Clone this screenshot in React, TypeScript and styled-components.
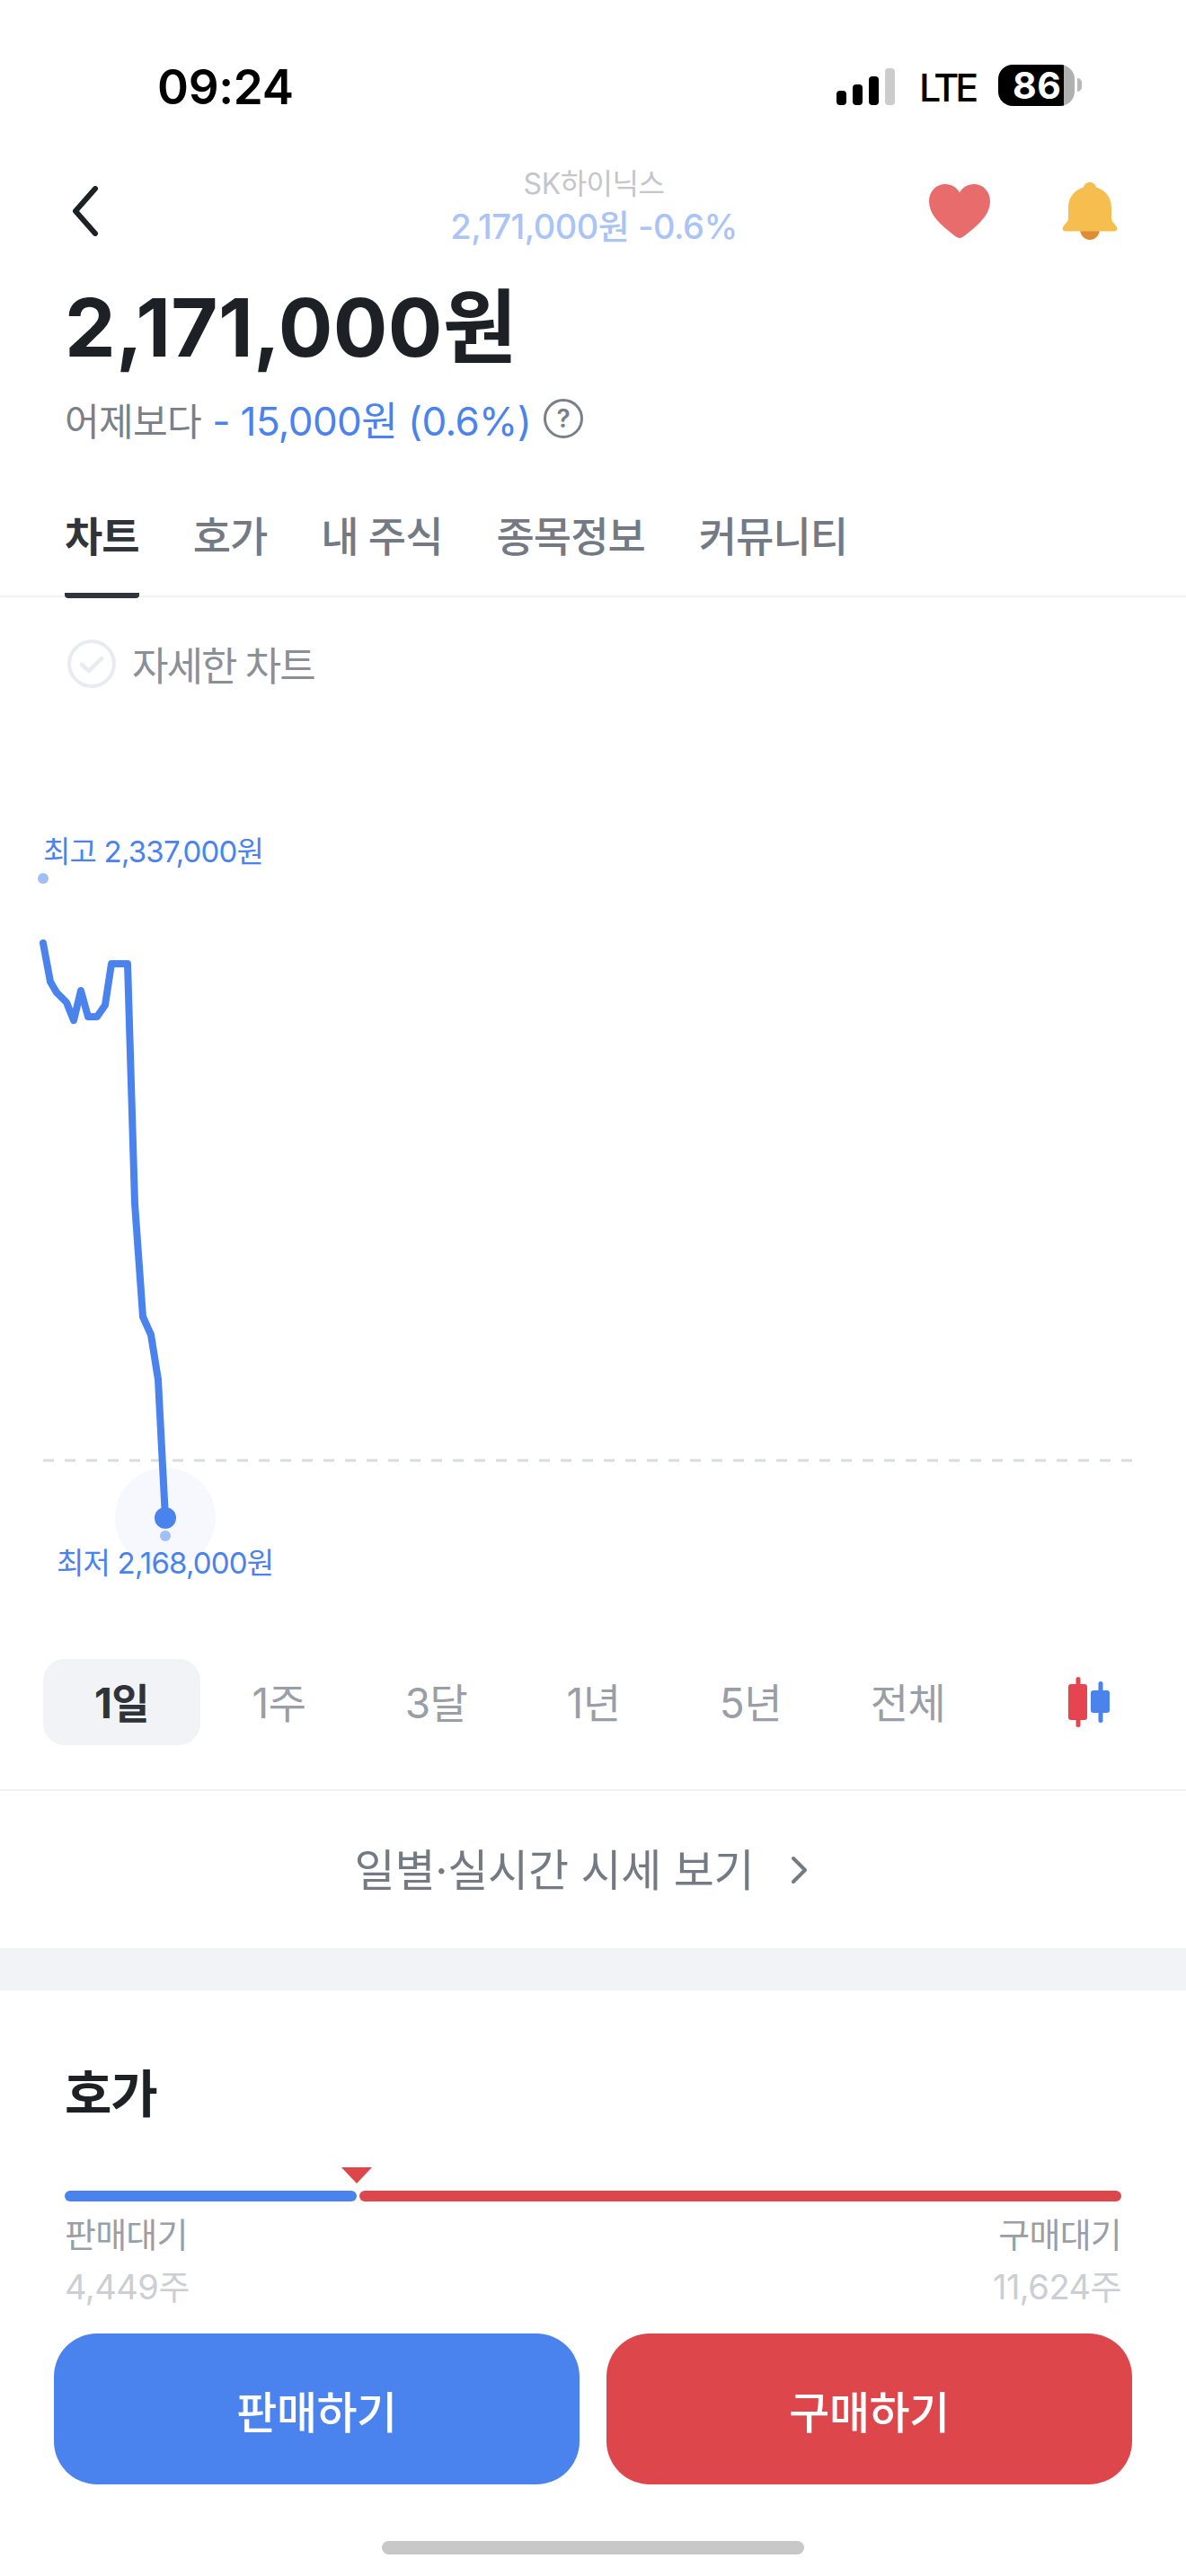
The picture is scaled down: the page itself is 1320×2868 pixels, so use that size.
import styled, { createGlobalStyle } from 'styled-components';

const GlobalStyle = createGlobalStyle`
  html, body {
    margin: 0;
    padding: 0;
    background: #fff;
  }
  * {
    box-sizing: border-box;
  }
  body {
    font-family: Inter, "Noto Sans CJK KR", sans-serif;
  }
`;

const tabs = ['차트', '호가', '내 주식', '종목정보', '커뮤니티'];
const periods = ['1일', '1주', '3달', '1년', '5년', '전체'];
const linePoints =
  '48,1050 56,1093 63,1105 74,1116 82,1136 90,1103 98,1132 108,1132 117,1119 124,1073 142,1073 150,1340 159,1466 168,1486 176,1536 184,1690';

const App = () => {
  return (
    <>
      <GlobalStyle />
      <Page>
        <StatusBar>
          <Clock>09:24</Clock>
          <StatusIcons>
            <svg width="65" height="41" viewBox="0 0 65 41">
              <rect x="0" y="25" width="11" height="16" rx="4" fill="#000" />
              <rect x="18" y="18" width="11" height="23" rx="4" fill="#000" />
              <rect x="36" y="9" width="11" height="32" rx="4" fill="#000" />
              <rect x="54" y="0" width="11" height="41" rx="4" fill="#ccc" />
            </svg>
            <Network>LTE</Network>
            <Battery>
              <BatteryLevel>86</BatteryLevel>
              <BatteryNub />
            </Battery>
          </StatusIcons>
        </StatusBar>

        <NavBar>
          <svg width="32" height="56" viewBox="0 0 32 56">
            <path
              d="M28 3 L6 28 L28 53"
              fill="none"
              stroke="#1d2025"
              strokeWidth="6"
              strokeLinecap="round"
              strokeLinejoin="round"
            />
          </svg>
          <NavTitle>
            <StockName>SK하이닉스</StockName>
            <StockQuote>2,171,000원 -0.6%</StockQuote>
          </NavTitle>
          <NavActions>
            <svg width="68" height="60" viewBox="0 0 68 60">
              <path
                d="M34 60c-2 0-3.500-1-5.500-2.500C15 47 0 35 0 19 0 8 8 0 18 0c7 0 12.500 3.500 16 9.500C37.500 3.500 43 0 50 0c10 0 18 8 18 19 0 16-15 28-28.500 38.500C37.500 59 36 60 34 60z"
                fill="#e76c6b"
              />
            </svg>
            <svg width="62" height="64" viewBox="0 0 62 64">
              <path d="M20 52h22a11 12 0 0 1-22 0z" fill="#dd8d35" />
              <path
                d="M31 0c4 0 6.500 2.500 7 5.500C47 8 55 16 55 28v13c0 2 4.500 6 6 9 1 2.500-.5 4.500-3 4.500H4c-2.500 0-4-2-3-4.500 1.500-3 6-7 6-9V28C7 16 15 8 24 5.500 24.500 2.500 27 0 31 0z"
                fill="#f6bd4f"
              />
            </svg>
          </NavActions>
        </NavBar>

        <Price>2,171,000원</Price>
        <Change>
          <ChangeLabel>어제보다</ChangeLabel>
          <ChangeValue>- 15,000원 (0.6%)</ChangeValue>
          <HelpBadge>?</HelpBadge>
        </Change>

        <TabBar>
          {tabs.map((tab, i) => (
            <Tab key={tab} $active={i === 0}>
              {tab}
            </Tab>
          ))}
        </TabBar>

        <DetailToggle>
          <svg width="54" height="54" viewBox="0 0 54 54">
            <circle cx="27" cy="27" r="25" fill="none" stroke="#e9ebf0" strokeWidth="4" />
            <path
              d="M16 28 L24 35 L38 21"
              fill="none"
              stroke="#e9ebf0"
              strokeWidth="4.500"
              strokeLinecap="round"
              strokeLinejoin="round"
            />
          </svg>
          <DetailLabel>자세한 차트</DetailLabel>
        </DetailToggle>

        <Chart>
          <ChartDrawing width="1320" height="1058" viewBox="0 790 1320 1058">
            <circle cx="184" cy="1690" r="56" fill="#f6f8fe" />
            <line
              x1="48"
              y1="1626"
              x2="1262"
              y2="1626"
              stroke="#d8dbe0"
              strokeWidth="3"
              strokeDasharray="12 12"
            />
            <circle cx="48" cy="978" r="6" fill="#a0bff5" />
            <polyline
              points={linePoints}
              fill="none"
              stroke="#4a82ee"
              strokeWidth="8"
              strokeLinecap="round"
              strokeLinejoin="round"
            />
            <circle cx="184" cy="1690" r="12" fill="#4a82ee" />
            <circle cx="184" cy="1710" r="6" fill="#a0bff5" />
          </ChartDrawing>
          <HighLabel>최고 2,337,000원</HighLabel>
          <LowLabel>최저 2,168,000원</LowLabel>
        </Chart>

        <PeriodRow>
          <Periods>
            {periods.map((period, i) => (
              <Period key={period} $active={i === 0}>
                {period}
              </Period>
            ))}
          </Periods>
          <svg width="46" height="56" viewBox="0 0 46 56">
            <rect x="8.500" y="0" width="5" height="56" rx="2.500" fill="#e74452" />
            <rect x="0" y="8" width="21" height="40" rx="3" fill="#e74452" />
            <rect x="33.500" y="5" width="5" height="46" rx="2.500" fill="#4a82ee" />
            <rect x="25" y="15" width="21" height="25" rx="3" fill="#4a82ee" />
          </svg>
        </PeriodRow>

        <DailyLink>
          일별·실시간 시세 보기
          <svg width="20" height="32" viewBox="0 0 20 32">
            <path
              d="M3 3 L16 16 L3 29"
              fill="none"
              stroke="#747a83"
              strokeWidth="4"
              strokeLinecap="round"
              strokeLinejoin="round"
            />
          </svg>
        </DailyLink>

        <SectionGap />

        <OrderBook>
          <SectionTitle>호가</SectionTitle>
          <RatioBar>
            <RatioMarker />
            <RatioSell />
            <RatioBuy />
          </RatioBar>
          <RatioLabels>
            <span>판매대기</span>
            <span>구매대기</span>
          </RatioLabels>
          <RatioValues>
            <span>4,449주</span>
            <span>11,624주</span>
          </RatioValues>
        </OrderBook>

        <Actions>
          <ActionButton $color="#4a82ee">판매하기</ActionButton>
          <ActionButton $color="#dd464b">구매하기</ActionButton>
        </Actions>

        <HomeIndicator />
      </Page>
    </>
  );
};

const Page = styled.div`
  width: 1320px;
  height: 2868px;
  overflow: hidden;
  background: #fff;
  display: flex;
  flex-direction: column;
`;

const StatusBar = styled.div`
  height: 160px;
  padding: 72px 124px 0 175px;
  display: flex;
  justify-content: space-between;
  align-items: flex-start;
`;

const Clock = styled.div`
  font-size: 53px;
  font-weight: 600;
  line-height: 50px;
  letter-spacing: -0.3px;
  color: #000;
`;

const StatusIcons = styled.div`
  display: flex;
  align-items: flex-end;
  height: 46px;

  svg {
    margin-bottom: 1px;
  }
`;

const Network = styled.div`
  margin: 0 27px;
  width: 61px;
  font-size: 43px;
  line-height: 42px;
  font-weight: 500;
  letter-spacing: -4px;
  color: #000;
`;

const Battery = styled.div`
  position: relative;
  width: 85px;
  height: 46px;
  border-radius: 16px;
  background: linear-gradient(90deg, #000 0 73px, #b0b0b0 73px 85px);
  color: #fff;
`;

const BatteryLevel = styled.div`
  padding-left: 16px;
  font-size: 41px;
  line-height: 46px;
  font-weight: 700;
  letter-spacing: 0.5px;
`;

const BatteryNub = styled.div`
  position: absolute;
  top: 15px;
  right: -8px;
  width: 5px;
  height: 15px;
  border-radius: 0 8px 8px 0;
  background: #b8b8b8;
`;

const NavBar = styled.div`
  height: 150px;
  padding: 0 76px 0 78px;
  display: grid;
  grid-template-columns: 1fr auto 1fr;
  align-items: center;
`;

const NavTitle = styled.div`
  padding-bottom: 10px;
  display: flex;
  flex-direction: column;
  align-items: center;
`;

const StockName = styled.div`
  font-size: 32px;
  line-height: 44px;
  letter-spacing: -0.5px;
  color: #c4c6ca;
`;

const StockQuote = styled.div`
  font-size: 38px;
  line-height: 50px;
  font-weight: 500;
  letter-spacing: -0.5px;
  color: #aac4f7;
`;

const NavActions = styled.div`
  display: flex;
  justify-content: flex-end;
  align-items: center;
  gap: 80px;
`;

const Price = styled.div`
  padding-left: 72px;
  font-size: 90px;
  line-height: 110px;
  font-weight: 700;
  letter-spacing: 0.3px;
  color: #1d2025;
`;

const Change = styled.div`
  margin-top: 18px;
  padding-left: 72px;
  height: 56px;
  display: flex;
  align-items: center;
  font-size: 42px;
  letter-spacing: -0.6px;
`;

const ChangeLabel = styled.span`
  color: #7b8088;
`;

const ChangeValue = styled.span`
  margin-left: 12px;
  font-size: 44px;
  color: #4a82ee;
`;

const HelpBadge = styled.span`
  margin-left: 14px;
  width: 44px;
  height: 44px;
  border: 3px solid #7b8088;
  border-radius: 50%;
  display: flex;
  align-items: center;
  justify-content: center;
  font-size: 28px;
  font-weight: 600;
  letter-spacing: 0;
  color: #7b8088;
`;

const TabBar = styled.div`
  margin-top: 46px;
  height: 125px;
  padding-left: 72px;
  display: flex;
  gap: 60px;
  border-bottom: 2px solid #f0f1f3;
`;

const Tab = styled.div<{ $active?: boolean }>`
  height: 126px;
  padding-top: 25px;
  font-size: 46px;
  line-height: 64px;
  letter-spacing: -1px;
  font-weight: ${(p) => (p.$active ? 700 : 500)};
  color: ${(p) => (p.$active ? '#30343b' : '#747a83')};
  border-bottom: ${(p) => (p.$active ? '6px solid #30343b' : 'none')};
  border-radius: 0 0 4px 4px;
`;

const DetailToggle = styled.div`
  margin-top: 47px;
  padding-left: 75px;
  height: 54px;
  display: flex;
  align-items: center;
  gap: 18px;
`;

const DetailLabel = styled.div`
  font-size: 44px;
  letter-spacing: -2px;
  color: #8b9098;
`;

const Chart = styled.div`
  position: relative;
  margin-top: 24px;
  height: 1058px;
`;

const ChartDrawing = styled.svg`
  position: absolute;
  left: 0;
  top: 0;
`;

const ChartLabel = styled.div`
  position: absolute;
  font-size: 33px;
  line-height: 40px;
  letter-spacing: -0.8px;
  color: #4a82ee;
  white-space: nowrap;
`;

const HighLabel = styled(ChartLabel)`
  left: 48px;
  top: 138px;
`;

const LowLabel = styled(ChartLabel)`
  left: 63px;
  top: 930px;
`;

const PeriodRow = styled.div`
  height: 146px;
  padding: 0 85px 50px 48px;
  display: flex;
  justify-content: space-between;
  align-items: center;
  border-bottom: 2px solid #f0f1f3;
`;

const Periods = styled.div`
  display: flex;
`;

const Period = styled.div<{ $active?: boolean }>`
  width: 175px;
  height: 96px;
  padding-bottom: 5px;
  border-radius: 24px;
  display: flex;
  align-items: center;
  justify-content: center;
  font-size: 46px;
  letter-spacing: -0.5px;
  font-weight: ${(p) => (p.$active ? 700 : 400)};
  color: ${(p) => (p.$active ? '#2f333a' : '#9a9ea6')};
  background: ${(p) => (p.$active ? '#f2f3f6' : 'transparent')};
`;

const DailyLink = styled.div`
  height: 175px;
  padding: 0 26px 6px 0;
  display: flex;
  align-items: center;
  justify-content: center;
  gap: 40px;
  font-size: 49px;
  letter-spacing: -0.2px;
  color: #747a83;

  svg {
    margin-top: 6px;
  }
`;

const SectionGap = styled.div`
  height: 47px;
  background: #f2f3f6;
`;

const OrderBook = styled.div`
  padding: 86px 72px 0;
`;

const SectionTitle = styled.div`
  font-size: 57px;
  line-height: 60px;
  font-weight: 700;
  letter-spacing: -1.2px;
  color: #1d2025;
`;

const RatioBar = styled.div`
  position: relative;
  margin-top: 77px;
  height: 12px;
  display: flex;
  gap: 3px;
`;

const RatioMarker = styled.div`
  position: absolute;
  left: 308px;
  top: -26px;
  width: 0;
  height: 0;
  border-left: 17px solid transparent;
  border-right: 17px solid transparent;
  border-top: 18px solid #dd464b;
`;

const RatioSell = styled.div`
  width: 325px;
  border-radius: 6px;
  background: #4a82ee;
`;

const RatioBuy = styled.div`
  flex: 1;
  border-radius: 6px;
  background: #dd464b;
`;

const RatioLabels = styled.div`
  margin-top: 16px;
  display: flex;
  justify-content: space-between;
  font-size: 38px;
  line-height: 42px;
  letter-spacing: -0.8px;
  color: #9a9ea6;
`;

const RatioValues = styled.div`
  margin-top: 16px;
  display: flex;
  justify-content: space-between;
  font-size: 38px;
  line-height: 42px;
  letter-spacing: -0.5px;
  color: #cbced3;
`;

const Actions = styled.div`
  margin-top: 31px;
  padding: 0 60px;
  display: flex;
  gap: 30px;
`;

const ActionButton = styled.div<{ $color: string }>`
  flex: 1;
  height: 168px;
  border-radius: 48px;
  display: flex;
  align-items: center;
  justify-content: center;
  font-size: 49px;
  font-weight: 500;
  letter-spacing: -0.5px;
  color: #fff;
  background: ${(p) => p.$color};
`;

const HomeIndicator = styled.div`
  margin: 63px auto 0;
  width: 470px;
  height: 15px;
  border-radius: 8px;
  background: #c8c8c8;
`;

export default App;
